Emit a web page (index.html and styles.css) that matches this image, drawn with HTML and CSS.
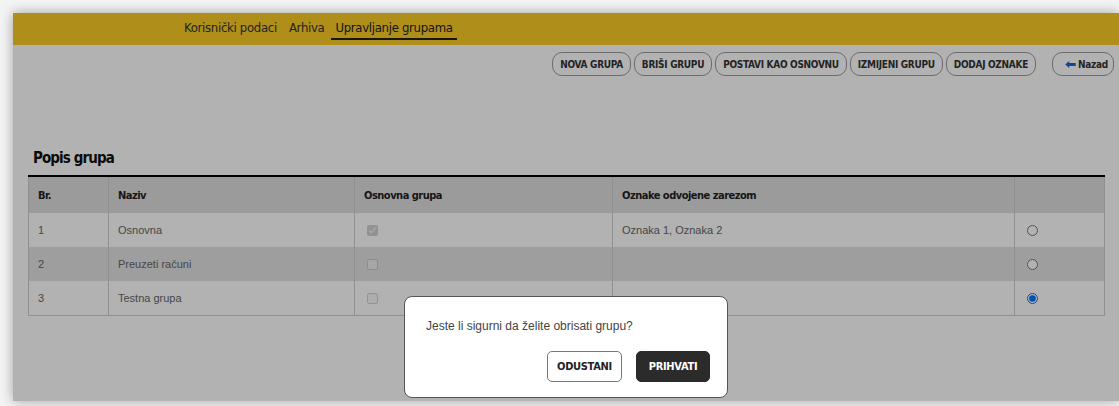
FILE: index.html
```html
<!DOCTYPE html>
<html lang="hr">
<head>
<meta charset="utf-8">
<title>Upravljanje grupama</title>
<link rel="stylesheet" href="styles.css">
</head>
<body>
<div class="window">
  <header class="topbar">
    <nav class="tabs">
      <a class="tab">Korisnički podaci</a>
      <a class="tab">Arhiva</a>
      <a class="tab active">Upravljanje grupama</a>
    </nav>
  </header>

  <div class="toolbar">
    <div class="actions">
      <button class="btn">NOVA GRUPA</button>
      <button class="btn">BRIŠI GRUPU</button>
      <button class="btn">POSTAVI KAO OSNOVNU</button>
      <button class="btn">IZMIJENI GRUPU</button>
      <button class="btn">DODAJ OZNAKE</button>
    </div>
    <button class="btn back">
      <svg class="back-icon" viewBox="0 0 12 8" width="11" height="7" aria-hidden="true">
        <path d="M0 4 L4.5 0 V2.4 H12 V5.6 H4.5 V8 Z" fill="#1e63c8"/>
      </svg>
      <span>Nazad</span>
    </button>
  </div>

  <main class="content">
    <h2 class="title">Popis grupa</h2>
    <table class="groups">
      <colgroup>
        <col class="c-no"><col class="c-name"><col class="c-main"><col class="c-tags"><col class="c-sel">
      </colgroup>
      <thead>
        <tr><th>Br.</th><th>Naziv</th><th>Osnovna grupa</th><th>Oznake odvojene zarezom</th><th></th></tr>
      </thead>
      <tbody>
        <tr><td>1</td><td>Osnovna</td><td><input type="checkbox" checked disabled></td><td>Oznaka 1, Oznaka 2</td><td><input type="radio" name="sel"></td></tr>
        <tr class="alt"><td>2</td><td>Preuzeti računi</td><td><input type="checkbox" disabled></td><td></td><td><input type="radio" name="sel"></td></tr>
        <tr><td>3</td><td>Testna grupa</td><td><input type="checkbox" disabled></td><td></td><td><input type="radio" name="sel" checked></td></tr>
      </tbody>
    </table>
  </main>

  <div class="overlay"></div>

  <div class="dialog" role="dialog">
    <p class="dialog-text">Jeste li sigurni da želite obrisati grupu?</p>
    <div class="dialog-actions">
      <button class="dbtn cancel">ODUSTANI</button>
      <button class="dbtn accept">PRIHVATI</button>
    </div>
  </div>
</div>
</body>
</html>
```

FILE: styles.css
```css
html, body {
  margin: 0;
  padding: 0;
  background: #f4f4f4;
  overflow: hidden;
}

body {
  width: 1119px;
  height: 406px;
}

.window {
  position: relative;
  margin: 13px 0 0 13px;
  width: 1106px;
  height: 388px;
  background: #ffffff;
  box-shadow: 0 0 12px rgba(0, 0, 0, 0.35);
  overflow: hidden;
  font-family: "DejaVu Sans Condensed", "DejaVu Sans", sans-serif;
  font-stretch: condensed;
  color: #333;
}

/* top navigation bar */
.topbar {
  height: 32px;
  background: #fbcc25;
  display: flex;
  align-items: stretch;
}

.tabs {
  display: flex;
  gap: 12px;
  margin-left: 171px;
  align-items: flex-start;
}

.tab {
  font-size: 13px;
  letter-spacing: -0.3px;
  color: #333;
  padding: 7px 0 0;
  height: 18px;
  line-height: 16px;
  text-decoration: none;
}

.tab.active {
  padding: 7px 4px 0;
  margin-left: -5px;
  border-bottom: 2px solid #222;
  color: #222;
}

/* action buttons */
.toolbar {
  display: flex;
  justify-content: flex-end;
  align-items: center;
  gap: 16px;
  padding: 7px 5px 0 0;
}

.actions {
  display: flex;
  gap: 3px;
}

.btn {
  height: 24px;
  padding: 0 7px;
  border: 1px solid #9a9a9a;
  border-radius: 10px;
  background: transparent;
  font-family: inherit;
  font-weight: bold;
  font-size: 10px;
  letter-spacing: -0.3px;
  color: #333;
  cursor: pointer;
}

.btn.back {
  display: flex;
  align-items: center;
  gap: 2px;
  padding: 0 0 0 12px;
  width: 62px;
}

.back-icon {
  display: block;
  flex-shrink: 0;
}

/* table section */
.content {
  padding: 72px 0 0 15px;
}

.title {
  margin: 0 0 7px 5px;
  font-size: 15px;
  letter-spacing: -0.9px;
  line-height: 20px;
  color: #111;
}

.groups {
  width: 1076px;
  border-collapse: collapse;
  border-top: 2px solid #000;
  table-layout: fixed;
}

.c-no { width: 80px; }
.c-name { width: 246px; }
.c-main { width: 258px; }
.c-tags { width: 402px; }
.c-sel { width: 90px; }

.groups th {
  height: 36px;
  padding: 0 9px;
  text-align: left;
  font-size: 11px;
  letter-spacing: -0.5px;
  color: #222;
  background: #dedede;
  border-left: 1px solid #cfcfcf;
  border-right: 1px solid #cfcfcf;
}

.groups td {
  height: 34px;
  padding: 0 9px;
  font-family: "Liberation Sans", Arial, sans-serif;
  font-stretch: normal;
  font-size: 11px;
  color: #666;
  border: 1px solid #cfcfcf;
  border-top: none;
  border-bottom: none;
}

.groups tbody tr:last-child td {
  border-bottom: 1px solid #cfcfcf;
}

.groups tr.alt td {
  background: #e3e3e3;
}

.groups input {
  margin: 0 0 0 3px;
  width: 11px;
  height: 11px;
  vertical-align: middle;
}

/* modal */
.overlay {
  position: absolute;
  inset: 0;
  background: rgba(0, 0, 0, 0.3);
}

.dialog {
  position: absolute;
  left: 391px;
  top: 283px;
  width: 322px;
  height: 100px;
  background: #fff;
  border: 1px solid #555;
  border-radius: 8px;
}

.dialog-text {
  margin: 21px 0 0 21px;
  font-family: "Liberation Sans", Arial, sans-serif;
  font-stretch: normal;
  font-size: 12px;
  line-height: 16px;
  color: #444;
}

.dialog-actions {
  display: flex;
  justify-content: flex-end;
  gap: 14px;
  margin: 17px 17px 0 0;
}

.dbtn {
  height: 31px;
  border-radius: 5px;
  font-family: inherit;
  font-weight: bold;
  font-size: 11px;
  letter-spacing: -0.3px;
  cursor: pointer;
}

.dbtn.cancel {
  width: 75px;
  background: #fff;
  color: #222;
  border: 1px solid #777;
}

.dbtn.accept {
  width: 74px;
  background: #2b2b2b;
  color: #fff;
  border: 1px solid #2b2b2b;
}
```
